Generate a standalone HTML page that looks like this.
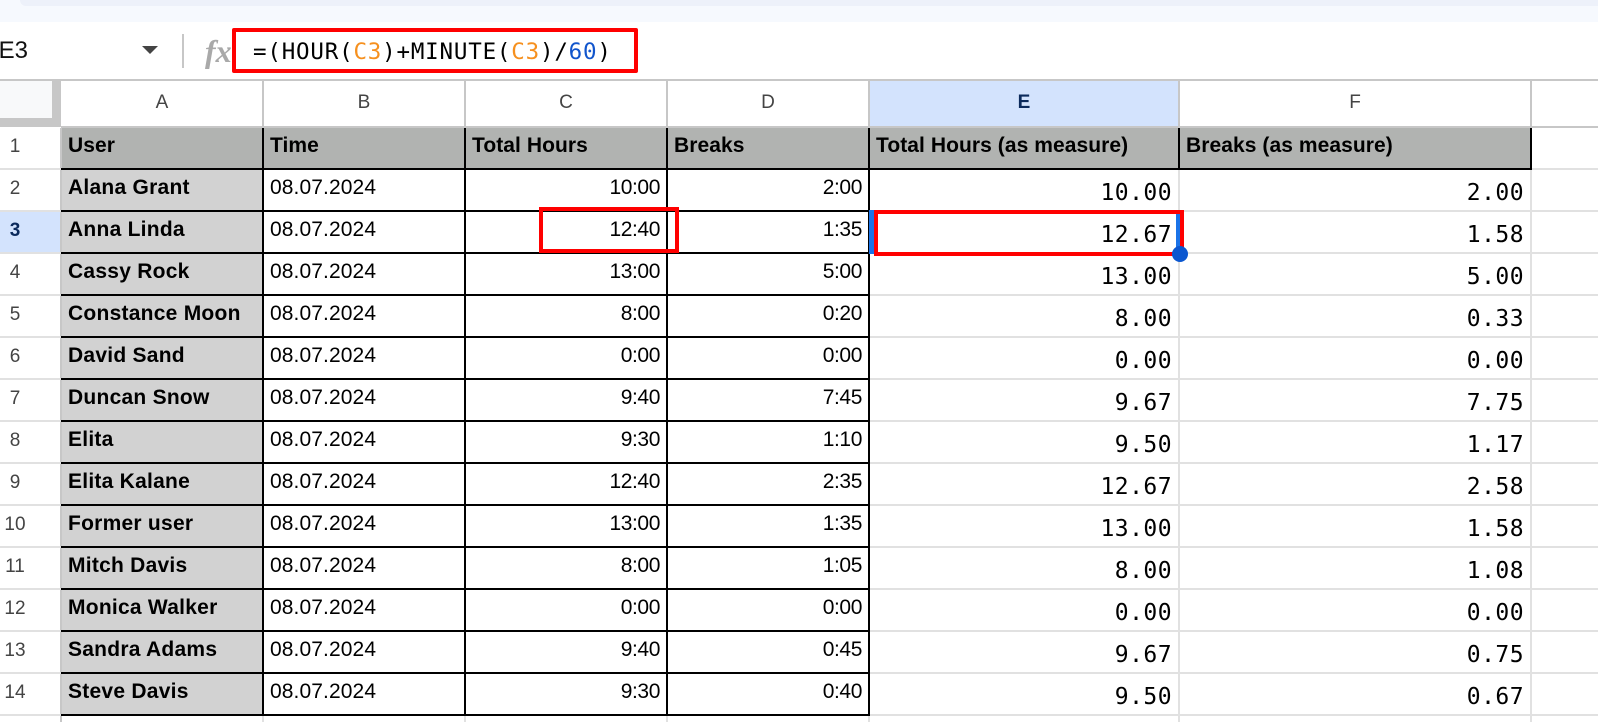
<!DOCTYPE html>
<html><head><meta charset="utf-8"><title>Sheet</title>
<style>
html,body{margin:0;padding:0;background:#fff;overflow:hidden}
#p{position:relative;width:1598px;height:722px;overflow:hidden;background:#fff;font-family:"Liberation Sans",Arial,sans-serif;color:#000}
#p div,#p span.x{position:absolute}
.r{left:0;width:1598px;height:42px}
.n,.a,.b,.c,.d,.e,.f{position:absolute;white-space:nowrap;top:1px;height:36px;line-height:36px}
.n{left:0;width:30px;text-align:center;font-size:19px;color:#444;top:2px}
.a{left:68px;font-size:21px;font-weight:bold;letter-spacing:.25px}
.t .a{letter-spacing:.07px}
.b{left:270px;font-size:21px;letter-spacing:.1px}
.c{right:938px;font-size:21px;letter-spacing:-.4px}
.d{right:736px;font-size:21px;letter-spacing:-.4px}
.e{right:426px;font:23px/46px "DejaVu Sans Mono",monospace;letter-spacing:.45px;height:46px;top:1px}
.f{right:74px;font:23px/46px "DejaVu Sans Mono",monospace;letter-spacing:.45px;height:46px;top:1px}
.h{position:absolute;top:81px;height:46px;line-height:44px;text-align:center;font-size:19px;color:#444}
.l{background:#e1e1e1}.k{background:#000}.g{background:#c7c7c7}.m{background:#ff0000}
#fx{left:253px;top:32px;font:22.5px/40px "DejaVu Sans Mono",monospace;letter-spacing:.8px;white-space:nowrap;color:#000}
#fx i{font-style:normal;color:#f6901e}#fx b{font-weight:normal;color:#1155cc}
</style></head><body><div id="p">
<div style="left:0;top:0;width:1598px;height:22px;background:#f6f9fe"></div>
<div style="left:20px;top:0;width:1578px;height:6px;background:#edf1fa;border-bottom-left-radius:10px"></div>
<div style="left:-8px;top:51px;font-size:24px;line-height:0;white-space:nowrap;color:#111">&nbsp;E3</div>
<svg style="position:absolute;left:141px;top:45px" width="18" height="10"><path d="M1 1H17L9 9Z" fill="#444"/></svg>
<div style="left:182px;top:34px;width:2px;height:34px;background:#c7c7c7"></div>
<div style="left:205px;top:31px;font:italic bold 32px/40px 'Liberation Serif',serif;color:#a9a9a9;white-space:nowrap">fx</div>
<div id="fx">=(HOUR(<i>C3</i>)+MINUTE(<i>C3</i>)/<b>60</b>)</div>
<div style="left:232px;top:28px;width:398px;height:37px;border:4px solid #f00;border-radius:2px;background:transparent"></div>

<div class="g" style="left:0;top:79px;width:1598px;height:2px"></div>
<div style="left:0;top:81px;width:52px;height:37px;background:#f8f9fa"></div>
<div class="g" style="left:52px;top:81px;width:9px;height:46px"></div>
<div class="g" style="left:0;top:118px;width:61px;height:9px"></div>
<div style="left:869px;top:81px;width:309px;height:45px;background:#d3e3fd"></div>
<div class="g" style="left:61px;top:126px;width:1537px;height:2px"></div>
<div class="h" style="left:61px;width:202px">A</div>
<div class="h" style="left:263px;width:202px">B</div>
<div class="h" style="left:465px;width:202px">C</div>
<div class="h" style="left:667px;width:202px">D</div>
<div class="h" style="left:869px;width:310px;font-weight:bold;color:#0b2a5c">E</div>
<div class="h" style="left:1179px;width:352px">F</div>
<div class="g" style="left:262px;top:81px;width:2px;height:45px"></div>
<div class="g" style="left:464px;top:81px;width:2px;height:45px"></div>
<div class="g" style="left:666px;top:81px;width:2px;height:45px"></div>
<div class="g" style="left:868px;top:81px;width:2px;height:45px"></div>
<div class="g" style="left:1178px;top:81px;width:2px;height:45px"></div>
<div class="g" style="left:1530px;top:81px;width:2px;height:45px"></div>

<div style="left:61px;top:128px;width:1470px;height:41px;background:#b1b3b1"></div>
<div style="left:61px;top:169px;width:202px;height:546px;background:#d2d2d2"></div>
<div style="left:0;top:211px;width:60px;height:41px;background:#d3e3fd"></div>
<div class="g" style="left:60px;top:128px;width:2px;height:594px"></div>

<div class="l" style="left:0;top:168px;width:61px;height:2px"></div>
<div class="l" style="left:0;top:210px;width:61px;height:2px"></div>
<div class="l" style="left:0;top:252px;width:61px;height:2px"></div>
<div class="l" style="left:0;top:294px;width:61px;height:2px"></div>
<div class="l" style="left:0;top:336px;width:61px;height:2px"></div>
<div class="l" style="left:0;top:378px;width:61px;height:2px"></div>
<div class="l" style="left:0;top:420px;width:61px;height:2px"></div>
<div class="l" style="left:0;top:462px;width:61px;height:2px"></div>
<div class="l" style="left:0;top:504px;width:61px;height:2px"></div>
<div class="l" style="left:0;top:546px;width:61px;height:2px"></div>
<div class="l" style="left:0;top:588px;width:61px;height:2px"></div>
<div class="l" style="left:0;top:630px;width:61px;height:2px"></div>
<div class="l" style="left:0;top:672px;width:61px;height:2px"></div>
<div class="l" style="left:0;top:714px;width:61px;height:2px"></div>

<div class="l" style="left:869px;top:210px;width:729px;height:2px"></div>
<div class="l" style="left:869px;top:252px;width:729px;height:2px"></div>
<div class="l" style="left:869px;top:294px;width:729px;height:2px"></div>
<div class="l" style="left:869px;top:336px;width:729px;height:2px"></div>
<div class="l" style="left:869px;top:378px;width:729px;height:2px"></div>
<div class="l" style="left:869px;top:420px;width:729px;height:2px"></div>
<div class="l" style="left:869px;top:462px;width:729px;height:2px"></div>
<div class="l" style="left:869px;top:504px;width:729px;height:2px"></div>
<div class="l" style="left:869px;top:546px;width:729px;height:2px"></div>
<div class="l" style="left:869px;top:588px;width:729px;height:2px"></div>
<div class="l" style="left:869px;top:630px;width:729px;height:2px"></div>
<div class="l" style="left:869px;top:672px;width:729px;height:2px"></div>
<div class="l" style="left:869px;top:714px;width:729px;height:2px"></div>
<div class="l" style="left:1531px;top:168px;width:67px;height:2px"></div>
<div class="l" style="left:1178px;top:170px;width:2px;height:552px"></div>
<div class="l" style="left:1530px;top:170px;width:2px;height:552px"></div>
<div class="l" style="left:262px;top:716px;width:2px;height:6px"></div>
<div class="l" style="left:464px;top:716px;width:2px;height:6px"></div>
<div class="l" style="left:666px;top:716px;width:2px;height:6px"></div>
<div class="l" style="left:868px;top:716px;width:2px;height:6px"></div>

<div class="k" style="left:262px;top:128px;width:2px;height:588px"></div>
<div class="k" style="left:464px;top:128px;width:2px;height:588px"></div>
<div class="k" style="left:666px;top:128px;width:2px;height:588px"></div>
<div class="k" style="left:868px;top:128px;width:2px;height:588px"></div>
<div class="k" style="left:1178px;top:128px;width:2px;height:42px"></div>
<div class="k" style="left:1530px;top:128px;width:2px;height:42px"></div>
<div class="k" style="left:61px;top:168px;width:1471px;height:2px"></div>
<div class="k" style="left:61px;top:210px;width:808px;height:2px"></div>
<div class="k" style="left:61px;top:252px;width:808px;height:2px"></div>
<div class="k" style="left:61px;top:294px;width:808px;height:2px"></div>
<div class="k" style="left:61px;top:336px;width:808px;height:2px"></div>
<div class="k" style="left:61px;top:378px;width:808px;height:2px"></div>
<div class="k" style="left:61px;top:420px;width:808px;height:2px"></div>
<div class="k" style="left:61px;top:462px;width:808px;height:2px"></div>
<div class="k" style="left:61px;top:504px;width:808px;height:2px"></div>
<div class="k" style="left:61px;top:546px;width:808px;height:2px"></div>
<div class="k" style="left:61px;top:588px;width:808px;height:2px"></div>
<div class="k" style="left:61px;top:630px;width:808px;height:2px"></div>
<div class="k" style="left:61px;top:672px;width:808px;height:2px"></div>
<div class="k" style="left:61px;top:714px;width:808px;height:2px"></div>

<div class="r t" style="top:127px"><span class="n">1</span><span class="a">User</span><span class="a" style="left:270px">Time</span><span class="a" style="left:472px">Total Hours</span><span class="a" style="left:674px">Breaks</span><span class="a" style="left:876px">Total Hours (as measure)</span><span class="a" style="left:1186px">Breaks (as measure)</span></div>
<div class="r" style="top:169px"><span class="n">2</span><span class="a">Alana Grant</span><span class="b">08.07.2024</span><span class="c">10:00</span><span class="d">2:00</span><span class="e">10.00</span><span class="f">2.00</span></div>
<div class="r" style="top:211px"><span class="n" style="font-weight:bold;color:#0b2a5c">3</span><span class="a">Anna Linda</span><span class="b">08.07.2024</span><span class="c">12:40</span><span class="d">1:35</span><span class="e">12.67</span><span class="f">1.58</span></div>
<div class="r" style="top:253px"><span class="n">4</span><span class="a">Cassy Rock</span><span class="b">08.07.2024</span><span class="c">13:00</span><span class="d">5:00</span><span class="e">13.00</span><span class="f">5.00</span></div>
<div class="r" style="top:295px"><span class="n">5</span><span class="a">Constance Moon</span><span class="b">08.07.2024</span><span class="c">8:00</span><span class="d">0:20</span><span class="e">8.00</span><span class="f">0.33</span></div>
<div class="r" style="top:337px"><span class="n">6</span><span class="a">David Sand</span><span class="b">08.07.2024</span><span class="c">0:00</span><span class="d">0:00</span><span class="e">0.00</span><span class="f">0.00</span></div>
<div class="r" style="top:379px"><span class="n">7</span><span class="a">Duncan Snow</span><span class="b">08.07.2024</span><span class="c">9:40</span><span class="d">7:45</span><span class="e">9.67</span><span class="f">7.75</span></div>
<div class="r" style="top:421px"><span class="n">8</span><span class="a">Elita</span><span class="b">08.07.2024</span><span class="c">9:30</span><span class="d">1:10</span><span class="e">9.50</span><span class="f">1.17</span></div>
<div class="r" style="top:463px"><span class="n">9</span><span class="a">Elita Kalane</span><span class="b">08.07.2024</span><span class="c">12:40</span><span class="d">2:35</span><span class="e">12.67</span><span class="f">2.58</span></div>
<div class="r" style="top:505px"><span class="n">10</span><span class="a">Former user</span><span class="b">08.07.2024</span><span class="c">13:00</span><span class="d">1:35</span><span class="e">13.00</span><span class="f">1.58</span></div>
<div class="r" style="top:547px"><span class="n">11</span><span class="a">Mitch Davis</span><span class="b">08.07.2024</span><span class="c">8:00</span><span class="d">1:05</span><span class="e">8.00</span><span class="f">1.08</span></div>
<div class="r" style="top:589px"><span class="n">12</span><span class="a">Monica Walker</span><span class="b">08.07.2024</span><span class="c">0:00</span><span class="d">0:00</span><span class="e">0.00</span><span class="f">0.00</span></div>
<div class="r" style="top:631px"><span class="n">13</span><span class="a">Sandra Adams</span><span class="b">08.07.2024</span><span class="c">9:40</span><span class="d">0:45</span><span class="e">9.67</span><span class="f">0.75</span></div>
<div class="r" style="top:673px"><span class="n">14</span><span class="a">Steve Davis</span><span class="b">08.07.2024</span><span class="c">9:30</span><span class="d">0:40</span><span class="e">9.50</span><span class="f">0.67</span></div>

<div style="left:869px;top:210px;width:302px;height:40px;border:solid #1a73e8;border-width:2px 4px 2px 5px"></div>
<div style="left:539px;top:207px;width:132px;height:38px;border:4px solid #f00"></div>
<div style="left:874px;top:210px;width:302px;height:38px;border:4px solid #f00"></div>
<div style="left:1172px;top:246px;width:16px;height:16px;border-radius:50%;background:#0b57d0"></div>
</div></body></html>
